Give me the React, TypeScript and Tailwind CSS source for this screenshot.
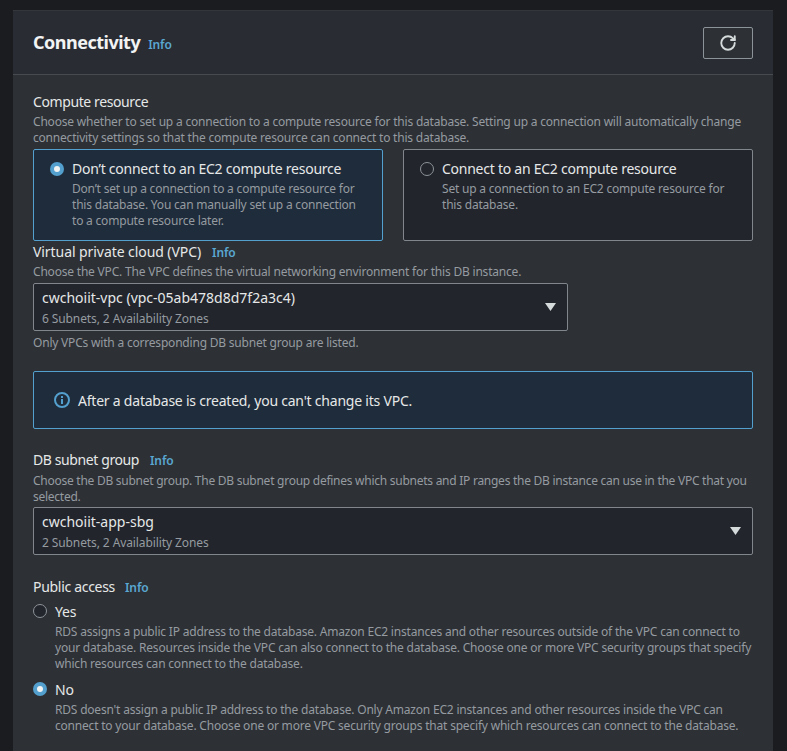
import React from "react";
import { RotateCw } from "lucide-react";

function Info({ className = "" }: { className?: string }) {
    return <span className={`text-[12px] font-semibold tracking-[-0.1px] text-[#5aa7d1] ${className}`}>Info</span>;
}

function Radio({ checked }: { checked?: boolean }) {
    if (checked) {
        return (
            <span className="flex h-[14px] w-[14px] shrink-0 items-center justify-center rounded-full bg-[#539fcd]">
                <span className="h-[6px] w-[6px] rounded-full bg-[#f2f3f3]" />
            </span>
        );
    }
    return <span className="block h-[14px] w-[14px] shrink-0 rounded-full border border-[#8d9499] bg-[#22252c]" />;
}

function Help({ children, className = "" }: { children: React.ReactNode; className?: string }) {
    return <div className={`text-[12px] leading-[16px] text-[#959ba0] ${className || "tracking-[-0.2px]"}`}>{children}</div>;
}

function Choice({ checked, title, text }: { checked?: boolean; title: string; text: string }) {
    const box = checked ? "border-[#539fcd] bg-[#1f2c3b]" : "border-[#80868b] bg-[#22252c]";
    return (
        <div className={`flex h-[92px] gap-[8px] rounded-[2px] border pl-[16px] pr-[20px] pt-[10px] ${box}`}>
            <div className="pt-[2px]">
                <Radio checked={checked} />
            </div>
            <div>
                <div className="text-[14px] leading-[17px] tracking-[-0.25px] text-[#e6e8e8]">{title}</div>
                <Help className="mt-[4px] tracking-[-0.2px]">{text}</Help>
            </div>
        </div>
    );
}

function Select({ title, sub, className = "" }: { title: string; sub: string; className?: string }) {
    return (
        <div className={`flex h-[48px] items-center justify-between rounded-[2px] border border-[#80868b] bg-[#22252c] pl-[8px] pr-[11px] ${className}`}>
            <div className="pt-[2px]">
                <div className="text-[14px] leading-[18px] text-[#e6e8e8]">{title}</div>
                <div className="mt-[4px] text-[12px] leading-[16px] tracking-[-0.1px] text-[#959ba0]">{sub}</div>
            </div>
            <svg width="11" height="8" viewBox="0 0 11 8" className="shrink-0">
                <path d="M0 0h11L5.5 8z" fill="#d5dbdb" />
            </svg>
        </div>
    );
}

function Option({ checked, title, text }: { checked?: boolean; title: string; text: string }) {
    return (
        <div className="flex gap-[8px]">
            <div className="pt-[1px]">
                <Radio checked={checked} />
            </div>
            <div>
                <div className="text-[14px] leading-[17px] tracking-[-0.2px] text-[#e6e8e8]">{title}</div>
                <Help className="mt-[4px] tracking-[-0.2px]">{text}</Help>
            </div>
        </div>
    );
}

export default function App() {
    return (
        <div className="h-[751px] overflow-hidden bg-[#1a1c20] pl-[13px] pr-[14px] pt-[10px] font-['Noto_Sans',sans-serif]">
            <div className="h-[741px] border-t border-[#33373c] bg-[#2d3035]">
                <div className="flex h-[64px] items-center justify-between border-b border-[#474b50] bg-[#292c33] pl-[20px] pr-[20px]">
                    <div className="flex items-baseline gap-[8px]">
                        <span className="text-[18px] font-bold tracking-[-0.5px] text-[#f2f3f3]">Connectivity</span>
                        <Info />
                    </div>
                    <button className="flex h-[32px] w-[50px] items-center justify-center rounded-[2px] border border-[#8d9499] bg-[#2d3035]">
                        <RotateCw size={18} strokeWidth={2.5} className="text-[#d5dbdb]" />
                    </button>
                </div>

                <div className="px-[20px] pt-[18px]">
                    <div className="text-[14px] leading-[18px] tracking-[-0.4px] text-[#e6e8e8]">Compute resource</div>
                    <Help className="mt-[3px] tracking-[-0.2px]">
                        Choose whether to set up a connection to a compute resource for this database. Setting up a connection will automatically change connectivity settings so that the compute resource can connect to this database.
                    </Help>

                    <div className="mt-[3px] grid grid-cols-[350px_350px] gap-[20px]">
                        <Choice checked title="Don’t connect to an EC2 compute resource" text="Don’t set up a connection to a compute resource for this database. You can manually set up a connection to a compute resource later." />
                        <Choice title="Connect to an EC2 compute resource" text="Set up a connection to an EC2 compute resource for this database." />
                    </div>

                    <div className="mt-[2px] flex items-baseline gap-[11px]">
                        <span className="text-[14px] leading-[18px] tracking-[-0.07px] text-[#e6e8e8]">Virtual private cloud (VPC)</span>
                        <Info />
                    </div>
                    <Help className="mt-[2px] tracking-[-0.2px]">Choose the VPC. The VPC defines the virtual networking environment for this DB instance.</Help>
                    <Select className="mt-[3px] w-[535px]" title="cwchoiit-vpc (vpc-05ab478d8d7f2a3c4)" sub="6 Subnets, 2 Availability Zones" />
                    <Help className="mt-[4px] tracking-[-0.2px]">Only VPCs with a corresponding DB subnet group are listed.</Help>

                    <div className="mt-[20px] flex h-[58px] items-center gap-[8px] rounded-[2px] border border-[#539fcd] bg-[#1f2c3b] pl-[20px]">
                        <svg width="16" height="16" viewBox="0 0 16 16" fill="none" stroke="#539fcd" strokeWidth="2">
                            <circle cx="8" cy="8" r="7" />
                            <path d="M8 7v5M8 4v2" />
                        </svg>
                        <span className="text-[14px] tracking-[-0.22px] text-[#e6e8e8]">After a database is created, you can't change its VPC.</span>
                    </div>

                    <div className="mt-[22px] flex items-baseline gap-[11px]">
                        <span className="text-[14px] leading-[18px] tracking-[-0.4px] text-[#e6e8e8]">DB subnet group</span>
                        <Info />
                    </div>
                    <Help className="mt-[3px] tracking-[-0.26px]">Choose the DB subnet group. The DB subnet group defines which subnets and IP ranges the DB instance can use in the VPC that you selected.</Help>
                    <Select className="mt-[2px]" title="cwchoiit-app-sbg" sub="2 Subnets, 2 Availability Zones" />

                    <div className="mt-[23px] flex items-baseline gap-[10px]">
                        <span className="text-[14px] leading-[18px] tracking-[-0.3px] text-[#e6e8e8]">Public access</span>
                        <Info />
                    </div>
                    <div className="mt-[6px] flex flex-col gap-[9px]">
                        <Option title="Yes" text="RDS assigns a public IP address to the database. Amazon EC2 instances and other resources outside of the VPC can connect to your database. Resources inside the VPC can also connect to the database. Choose one or more VPC security groups that specify which resources can connect to the database." />
                        <Option checked title="No" text="RDS doesn't assign a public IP address to the database. Only Amazon EC2 instances and other resources inside the VPC can connect to your database. Choose one or more VPC security groups that specify which resources can connect to the database." />
                    </div>
                </div>
            </div>
        </div>
    );
}
